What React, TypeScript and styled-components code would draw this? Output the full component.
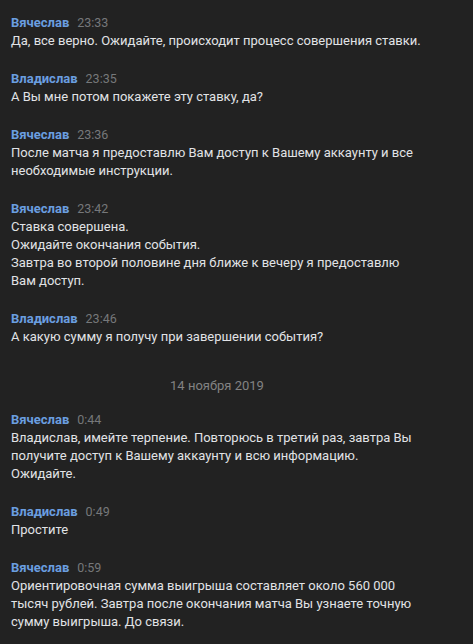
import React from "react";
import styled, { createGlobalStyle } from "styled-components";

const GlobalStyle = createGlobalStyle`
  html, body {
    margin: 0;
    padding: 0;
    background: #222222;
  }
  body {
    font-family: Roboto, "Noto Sans", "Liberation Sans", sans-serif;
    -webkit-font-smoothing: antialiased;
  }
`;

const History = styled.div`
  min-height: 644px;
  box-sizing: border-box;
  padding: 14px 50px 0 11px;
  background: #222222;
`;

const Message = styled.div`
  padding-bottom: 20px;
`;

const Header = styled.div`
  display: flex;
  align-items: baseline;
  gap: 8px;
  height: 18px;
  line-height: 18px;
`;

const Author = styled.span`
  color: #6a9ee0;
  font-size: 13px;
  font-weight: 700;
`;

const Time = styled.span`
  color: #76787a;
  font-size: 12.5px;
`;

const Text = styled.div`
  color: #e1e3e6;
  font-size: 13px;
  line-height: 18px;
  white-space: pre-line;
`;

const DateRow = styled.div`
  margin-top: 11px;
  padding-bottom: 16px;
  text-align: center;
  color: #828282;
  font-size: 13px;
  line-height: 18px;
`;

type TMessage = { author: string; time: string; text: string };

const before: TMessage[] = [
  {
    author: "Вячеслав",
    time: "23:33",
    text: "Да, все верно. Ожидайте, происходит процесс совершения ставки.",
  },
  {
    author: "Владислав",
    time: "23:35",
    text: "А Вы мне потом покажете эту ставку, да?",
  },
  {
    author: "Вячеслав",
    time: "23:36",
    text: "После матча я предоставлю Вам доступ к Вашему аккаунту и все необходимые инструкции.",
  },
  {
    author: "Вячеслав",
    time: "23:42",
    text: "Ставка совершена.\nОжидайте окончания события.\nЗавтра во второй половине дня ближе к вечеру я предоставлю Вам доступ.",
  },
  {
    author: "Владислав",
    time: "23:46",
    text: "А какую сумму я получу при завершении события?",
  },
];

const after: TMessage[] = [
  {
    author: "Вячеслав",
    time: "0:44",
    text: "Владислав, имейте терпение. Повторюсь в третий раз, завтра Вы получите доступ к Вашему аккаунту и всю информацию.\nОжидайте.",
  },
  { author: "Владислав", time: "0:49", text: "Простите" },
  {
    author: "Вячеслав",
    time: "0:59",
    text: "Ориентировочная сумма выигрыша составляет около 560 000 тысяч рублей. Завтра после окончания матча Вы узнаете точную сумму выигрыша. До связи.",
  },
];

const Item: React.FC<TMessage> = ({ author, time, text }) => (
  <Message>
    <Header>
      <Author>{author}</Author>
      <Time>{time}</Time>
    </Header>
    <Text>{text}</Text>
  </Message>
);

const App: React.FC = () => {
  return (
    <>
      <GlobalStyle />
      <History>
        {before.map((m) => (
          <Item key={m.time} {...m} />
        ))}
        <DateRow>14 ноября 2019</DateRow>
        {after.map((m) => (
          <Item key={m.time} {...m} />
        ))}
      </History>
    </>
  );
};

export default App;
